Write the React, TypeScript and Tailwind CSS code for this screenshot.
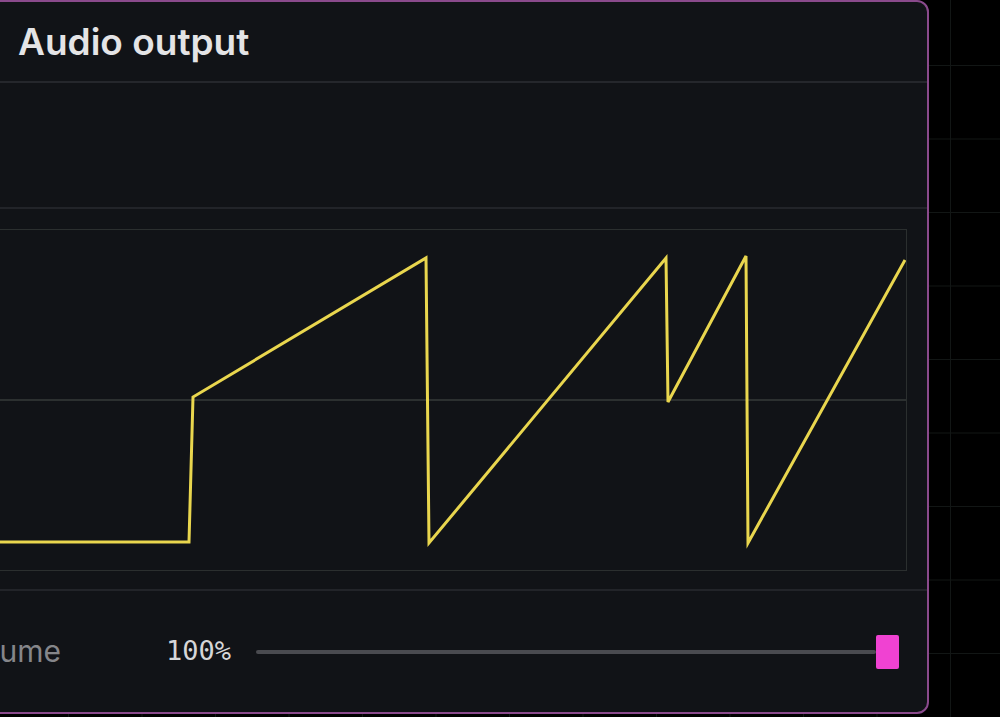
import React from 'react';

const wave = [
  [0, 312], [198, 312], [202, 167], [435, 28], [438, 313],
  [675, 28], [677, 172], [755, 26], [757, 313], [914, 30],
];

function Waveform() {
  const points = wave.map(([x, y]) => `${x},${y}`).join(' ');
  return (
    <svg className="absolute inset-0 h-full w-full" viewBox="0 0 915 340" preserveAspectRatio="none">
      <line x1="0" y1="170" x2="915" y2="170" stroke="#2c3030" strokeWidth="2" />
      <polyline points={points} fill="none" stroke="#e9d64e" strokeWidth="3" strokeLinejoin="miter" />
    </svg>
  );
}

export default function App() {
  return (
    <div className="flex h-[717px] w-[1000px] overflow-hidden bg-black bg-[linear-gradient(#121615_1px,transparent_1px),linear-gradient(90deg,#121615_1px,transparent_1px)] bg-[size:73.5px_73.5px] bg-[position:68px_65px] font-['Inter',sans-serif]">
      <div className="-ml-[12px] flex h-[714px] w-[941px] shrink-0 flex-col rounded-r-[12px] border-2 border-[#8a4a8c] bg-[#111317]">
        <div className="flex h-[81px] items-center border-b-2 border-[#25272c] pl-[28px]">
          <h1 className="text-[37px] font-semibold text-[#e4e4e6]">Audio output</h1>
        </div>

        <div className="h-[126px] border-b-2 border-[#222429]" />

        <div className="border-b-2 border-[#222429] pb-[18px] pr-[20px] pt-[20px]">
          <div className="relative h-[342px] border border-[#2b2f2f]">
            <Waveform />
          </div>
        </div>

        <div className="flex flex-1 items-center pr-[28px]">
          <span className="-ml-[35px] shrink-0 text-[30px] text-[#85868a]">Volume</span>
          <span className="ml-[105px] shrink-0 font-['DejaVu_Sans_Mono',monospace] text-[27px] text-[#d6d6d8]">100%</span>
          <div className="ml-[25px] flex flex-1 items-center">
            <div className="h-[4px] flex-1 rounded-full bg-[#4a4b50]" />
            <div className="h-[34px] w-[23px] rounded-[2px] bg-[#f042d2]" />
          </div>
        </div>
      </div>
    </div>
  );
}
